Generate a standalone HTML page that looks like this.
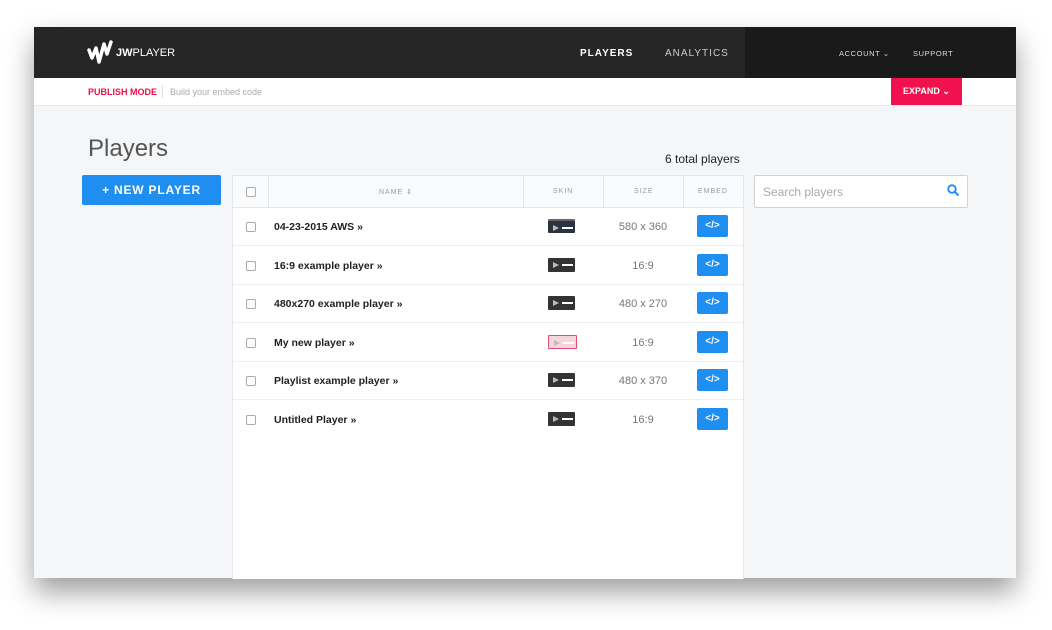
<!DOCTYPE html>
<html><head><style>
body{margin:0;width:1052px;height:630px;background:#fff;position:relative;font-family:"Liberation Sans",sans-serif;overflow:hidden}
.win{position:absolute;left:34px;top:27px;width:982px;height:551px;background:#f5f6f8;box-shadow:0 14px 26px rgba(0,0,0,.38)}
.top{position:absolute;left:0;top:0;width:982px;height:51px;background:#262626}
.top .r{position:absolute;left:711px;top:0;width:271px;height:51px;background:#1a1a1a}
.t{position:absolute;color:#fff;white-space:nowrap}
.sub{position:absolute;left:0;top:51px;width:982px;height:27px;background:#fff;border-bottom:1px solid #e6e8eb}
.row{position:absolute;left:0;width:510px;height:38px;border-bottom:1px solid #eef0f2}
.cb{position:absolute;left:13px;width:8px;height:8px;border:1px solid #aaa;border-radius:2px;background:#fff}
.nm{position:absolute;left:41px;font-size:10.5px;color:#222;font-weight:bold}
.skin{position:absolute;left:315px;width:27px;height:14px;background:#333;border-radius:1px}
.skin:before{content:"";position:absolute;left:5px;top:4px;border-left:6px solid #bbb;border-top:3px solid transparent;border-bottom:3px solid transparent}
.skin:after{content:"";position:absolute;left:14px;top:6px;width:11px;height:2px;background:#fff}
.sz{position:absolute;left:370px;width:80px;text-align:center;font-size:11px;color:#777}
.emb{position:absolute;left:464px;width:31px;height:22px;background:#1f8ef1;border-radius:2px;color:#fff;font-size:10px;text-align:center;line-height:22px;font-weight:bold}
</style></head><body>
<div class="win">
 <div class="top"><div class="r"></div>
  <svg style="position:absolute;left:53px;top:13px" width="28" height="26" viewBox="0 0 28 26"><path d="M2 10 L5 18 L9 8 L12 22 L17 4 L20 14 L24 2" stroke="#fff" stroke-width="3.5" fill="none" stroke-linejoin="round" stroke-linecap="round"/></svg>
  <div class="t" style="left:82px;top:20px;font-size:11px"><b>JW</b>PLAYER</div>
  <div class="t" style="left:546px;top:21px;font-size:10px;font-weight:bold;letter-spacing:1px">PLAYERS</div>
  <div style="position:absolute;left:564px;top:51px;border:5px solid transparent;border-top-color:#262626;border-bottom:0"></div>
  <div class="t" style="left:631px;top:21px;font-size:10px;letter-spacing:1px;color:#ccc">ANALYTICS</div>
  <div class="t" style="left:805px;top:22px;font-size:7.5px;letter-spacing:.6px;color:#ddd">ACCOUNT ⌄</div>
  <div class="t" style="left:879px;top:22px;font-size:7.5px;letter-spacing:.6px;color:#ddd">SUPPORT</div>
 </div>
 <div class="sub">
  <div class="t" style="left:54px;top:9px;font-size:9px;font-weight:bold;color:#e8104f">PUBLISH MODE</div>
  <div style="position:absolute;left:128px;top:7px;width:1px;height:13px;background:#ddd"></div>
  <div class="t" style="left:136px;top:9px;font-size:9px;color:#aaa">Build your embed code</div>
  <div style="position:absolute;left:857px;top:0;width:71px;height:27px;background:#f2114f;color:#fff;font-size:9px;font-weight:bold;text-align:center;line-height:27px">EXPAND ⌄</div>
 </div>
 <div class="t" style="left:54px;top:108px;font-size:24px;color:#555">Players</div>
 <div class="t" style="left:631px;top:125px;font-size:12px;color:#222">6 total players</div>
 <div style="position:absolute;left:48px;top:148px;width:139px;height:30px;background:#1f8ef1;border-radius:2px;color:#fff;font-size:12px;font-weight:bold;letter-spacing:.8px;text-align:center;line-height:30px">+ NEW PLAYER</div>
 <div style="position:absolute;left:720px;top:148px;width:212px;height:31px;background:#fff;border:1px solid #cfd3d8;border-radius:2px">
  <div class="t" style="left:8px;top:9px;font-size:12px;color:#aaa">Search players</div>
  <svg style="position:absolute;left:192px;top:8px" width="13" height="13"><circle cx="5" cy="5" r="3.8" stroke="#1f8ef1" stroke-width="1.8" fill="none"/><path d="M8 8 L11.5 11.5" stroke="#1f8ef1" stroke-width="2"/></svg>
 </div>
 <div style="position:absolute;left:198px;top:148px;width:510px;height:403px;background:#fff;border:1px solid #e3e6ea;border-bottom:0">
  <div style="position:absolute;left:0;top:0;width:510px;height:31px;border-bottom:1px solid #e3e6ea;background:#fafbfc;font-size:7px;color:#999;letter-spacing:1px">
   <div class="cb" style="top:11px"></div>
   <div style="position:absolute;left:35px;top:0;width:1px;height:31px;background:#e3e6ea"></div>
   <div class="t" style="left:146px;top:12px;color:#999">NAME ⇕</div>
   <div style="position:absolute;left:290px;top:0;width:1px;height:31px;background:#e3e6ea"></div>
   <div class="t" style="left:320px;top:12px;color:#999">SKIN</div>
   <div style="position:absolute;left:370px;top:0;width:1px;height:31px;background:#e3e6ea"></div>
   <div class="t" style="left:401px;top:12px;color:#999">SIZE</div>
   <div style="position:absolute;left:450px;top:0;width:1px;height:31px;background:#e3e6ea"></div>
   <div class="t" style="left:465px;top:12px;color:#999">EMBED</div>
  </div>
  <div class="row" style="top:31px"><div class="cb" style="top:15px"></div><div class="nm" style="top:14px">04-23-2015 AWS »</div><div class="skin" style="top:12px;background:#2c3340;border-top:2px solid #666;height:12px"></div><div class="sz" style="top:14px">580 x 360</div><div class="emb" style="top:8px">&lt;/&gt;</div></div>
  <div class="row" style="top:70px"><div class="cb" style="top:15px"></div><div class="nm" style="top:14px">16:9 example player »</div><div class="skin" style="top:12px"></div><div class="sz" style="top:14px">16:9</div><div class="emb" style="top:8px">&lt;/&gt;</div></div>
  <div class="row" style="top:108px"><div class="cb" style="top:15px"></div><div class="nm" style="top:14px">480x270 example player »</div><div class="skin" style="top:12px"></div><div class="sz" style="top:14px">480 x 270</div><div class="emb" style="top:8px">&lt;/&gt;</div></div>
  <div class="row" style="top:147px"><div class="cb" style="top:15px"></div><div class="nm" style="top:14px">My new player »</div><div class="skin" style="top:12px;background:#f6d6dd;border:1px solid #e84a6f;height:12px"></div><div class="sz" style="top:14px">16:9</div><div class="emb" style="top:8px">&lt;/&gt;</div></div>
  <div class="row" style="top:185px"><div class="cb" style="top:15px"></div><div class="nm" style="top:14px">Playlist example player »</div><div class="skin" style="top:12px"></div><div class="sz" style="top:14px">480 x 370</div><div class="emb" style="top:8px">&lt;/&gt;</div></div>
  <div class="row" style="top:224px;border:0"><div class="cb" style="top:15px"></div><div class="nm" style="top:14px">Untitled Player »</div><div class="skin" style="top:12px"></div><div class="sz" style="top:14px">16:9</div><div class="emb" style="top:8px">&lt;/&gt;</div></div>
 </div>
</div>
</body></html>
